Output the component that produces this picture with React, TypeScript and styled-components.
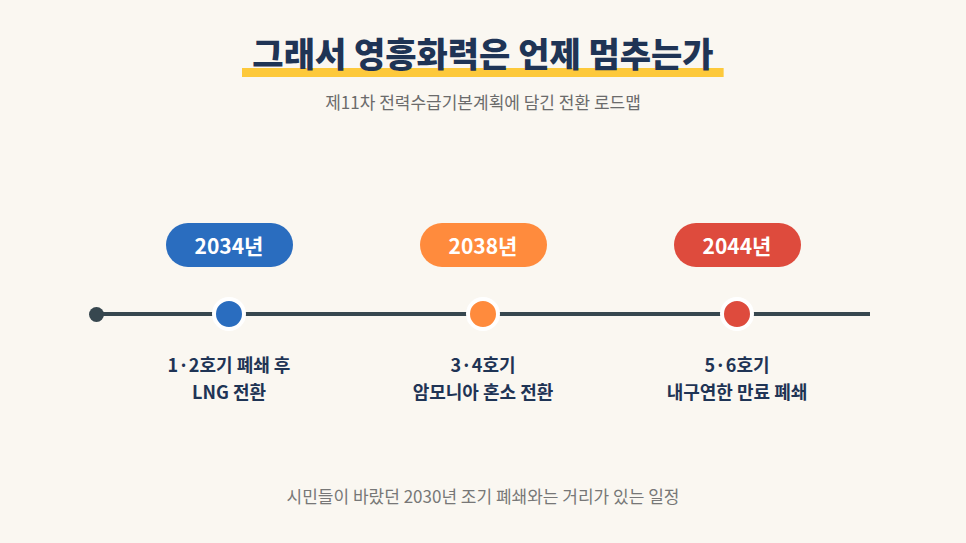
import styled, { createGlobalStyle } from "styled-components";

const GlobalStyle = createGlobalStyle`
  html, body {
    margin: 0;
    padding: 0;
    background: #faf7f1;
  }
  body {
    font-family: "Noto Sans CJK KR", "Noto Sans", sans-serif;
  }
`;

const Page = styled.div`
  width: 966px;
  height: 543px;
  display: flex;
  flex-direction: column;
  align-items: center;
  background: #faf7f1;
  overflow: hidden;
`;

const Title = styled.h1`
  margin: 30px 0 0;
  padding: 0 10px 1px;
  font-size: 34px;
  font-weight: 900;
  line-height: 46px;
  color: #1f3455;
  background-image: linear-gradient(#fdc93b, #fdc93b);
  background-size: 100% 9px;
  background-position: bottom;
  background-repeat: no-repeat;
`;

const Subtitle = styled.p`
  margin: 13px 0 0;
  font-size: 17px;
  line-height: 24px;
  color: #6b6b6b;
`;

const Row = styled.div`
  width: 774px;
  padding: 0 6px;
  box-sizing: border-box;
  display: grid;
  grid-template-columns: repeat(3, 1fr);
  justify-items: center;
`;

const PillRow = styled(Row)`
  margin-top: 109px;
`;

const Pill = styled.div<{ $color: string }>`
  width: 127px;
  height: 44px;
  border-radius: 22px;
  background: ${(p) => p.$color};
  color: #fff;
  font-size: 21px;
  font-weight: 700;
  display: flex;
  align-items: center;
  justify-content: center;
`;

const Track = styled(Row)`
  position: relative;
  margin-top: 30px;
  height: 34px;
  align-items: center;
  background-image: linear-gradient(#37474f, #37474f);
  background-size: 100% 4px;
  background-position: center;
  background-repeat: no-repeat;

  &::before {
    content: "";
    position: absolute;
    left: -7px;
    top: 50%;
    width: 15px;
    height: 15px;
    margin-top: -7.5px;
    border-radius: 50%;
    background: #37474f;
  }
`;

const Marker = styled.span<{ $color: string }>`
  width: 26px;
  height: 26px;
  border-radius: 50%;
  border: 4px solid #fff;
  background: ${(p) => p.$color};
`;

const LabelRow = styled(Row)`
  margin-top: 20px;
`;

const Label = styled.div`
  font-size: 18px;
  font-weight: 700;
  line-height: 27px;
  color: #1f3455;
  text-align: center;
`;

const Footer = styled.p`
  margin: 79px 0 0;
  font-size: 17px;
  line-height: 24px;
  color: #777;
`;

const stages = [
  { year: "2034년", color: "#2a6dbf", lines: ["1·2호기 폐쇄 후", "LNG 전환"] },
  { year: "2038년", color: "#ff8b3d", lines: ["3·4호기", "암모니아 혼소 전환"] },
  { year: "2044년", color: "#de4b3d", lines: ["5·6호기", "내구연한 만료 폐쇄"] },
];

export default function App() {
  return (
    <Page>
      <GlobalStyle />
      <Title>그래서 영흥화력은 언제 멈추는가</Title>
      <Subtitle>제11차 전력수급기본계획에 담긴 전환 로드맵</Subtitle>
      <PillRow>
        {stages.map((s) => (
          <Pill key={s.year} $color={s.color}>
            {s.year}
          </Pill>
        ))}
      </PillRow>
      <Track>
        {stages.map((s) => (
          <Marker key={s.year} $color={s.color} />
        ))}
      </Track>
      <LabelRow>
        {stages.map((s) => (
          <Label key={s.year}>
            {s.lines[0]}
            <br />
            {s.lines[1]}
          </Label>
        ))}
      </LabelRow>
      <Footer>시민들이 바랐던 2030년 조기 폐쇄와는 거리가 있는 일정</Footer>
    </Page>
  );
}
